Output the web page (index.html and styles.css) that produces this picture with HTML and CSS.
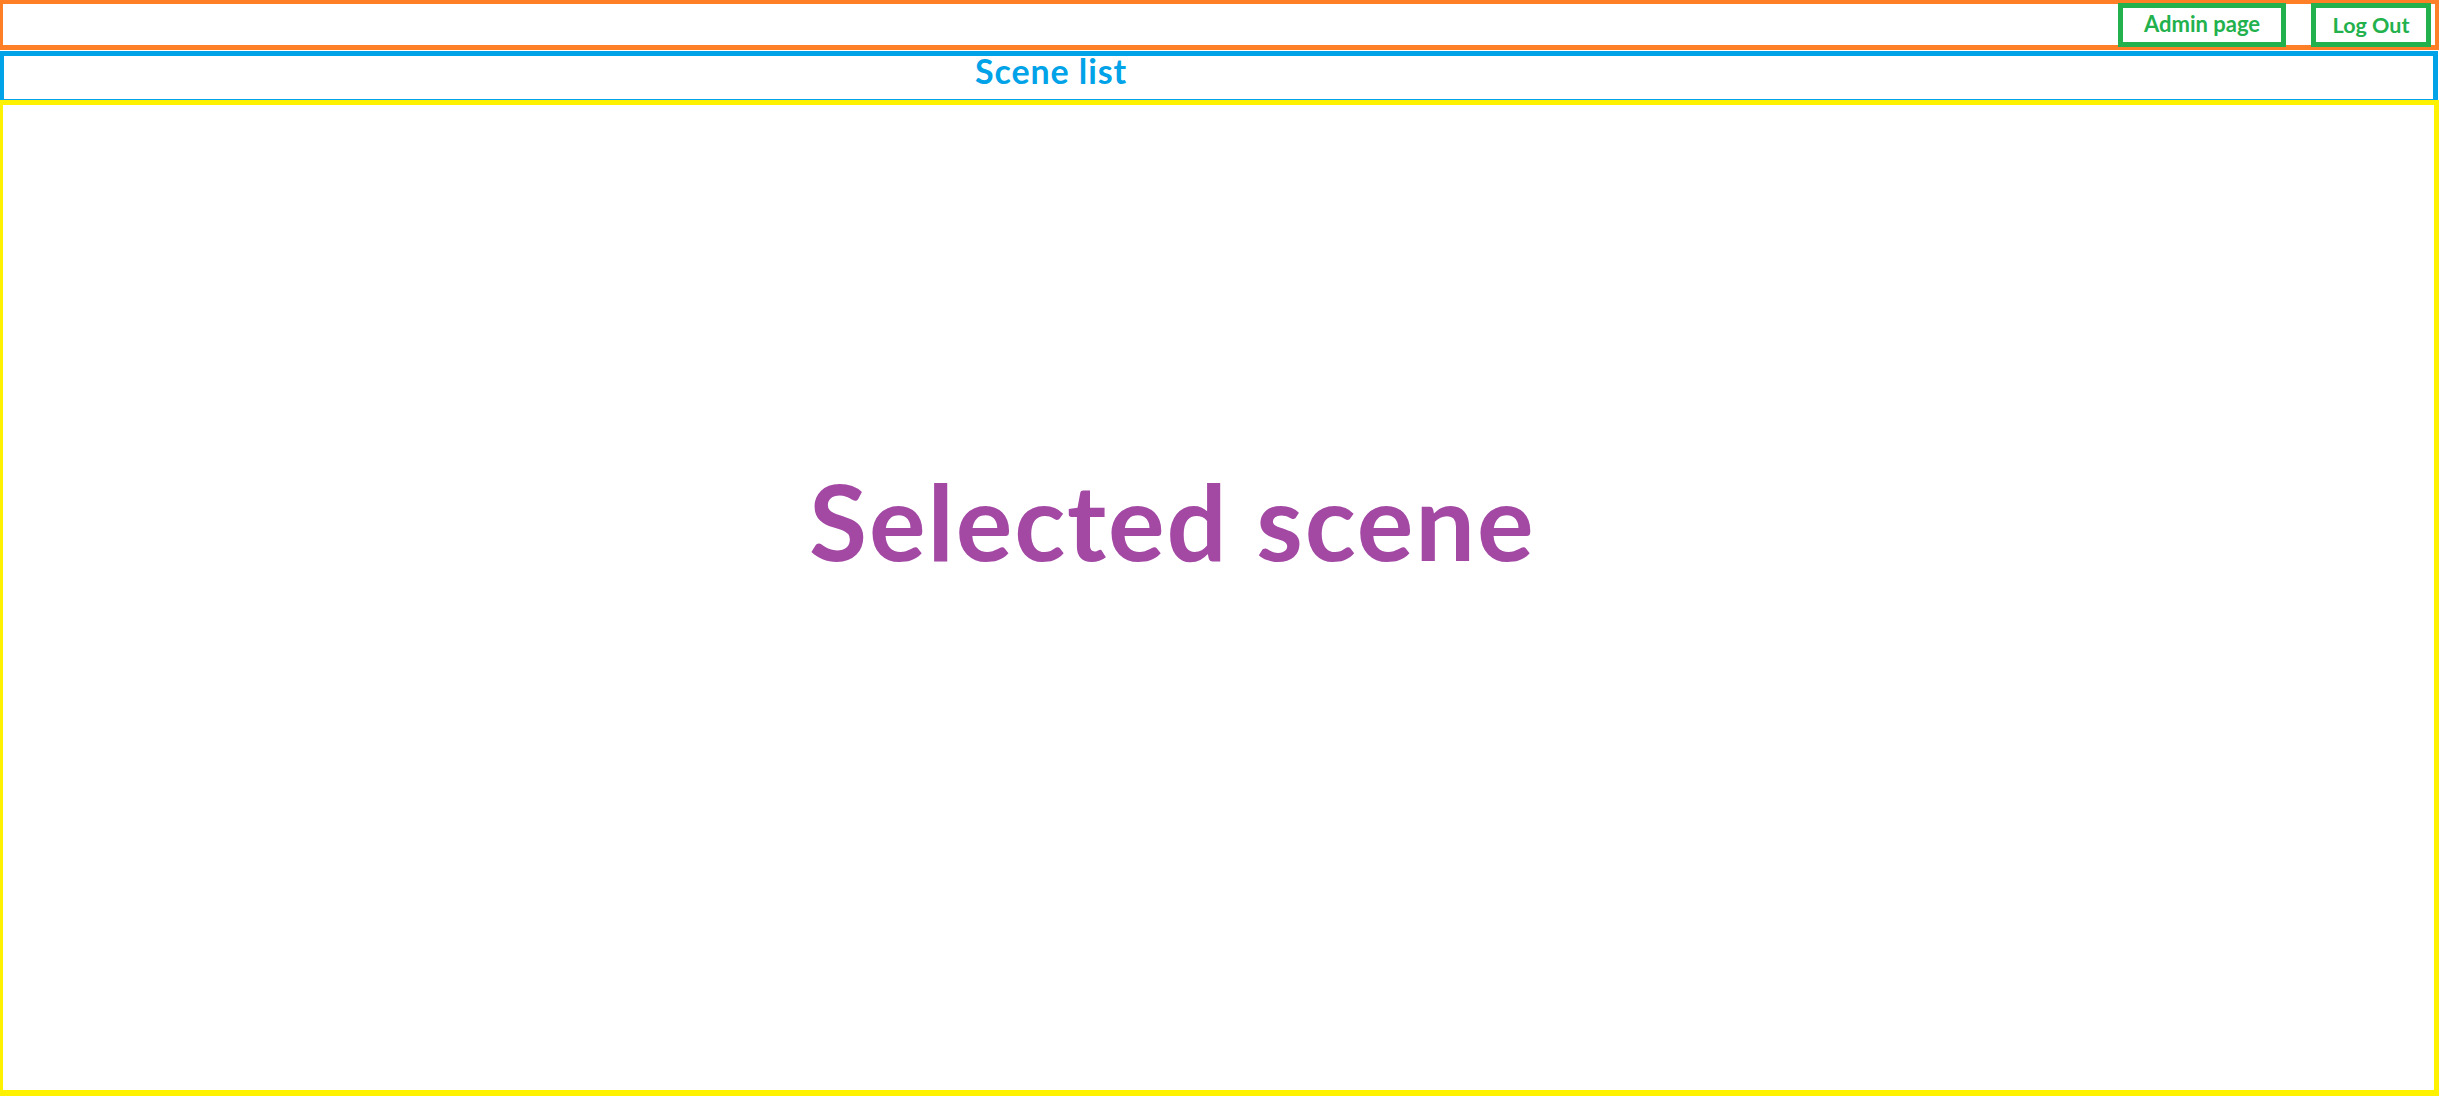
FILE: index.html
```html
<!DOCTYPE html>
<html lang="en">
<head>
<meta charset="utf-8">
<title>Scenes</title>
<link rel="stylesheet" href="styles.css">
</head>
<body>
<header class="topbar">
  <a class="btn btn-admin" href="#">Admin page</a>
  <a class="btn btn-logout" href="#">Log Out</a>
</header>
<nav class="scene-list">
  <span class="scene-list-title">Scene list</span>
</nav>
<main class="scene-view">
  <h1 class="scene-title">Selected scene</h1>
</main>
</body>
</html>
```
FILE: styles.css
```css
* { box-sizing: border-box; }
html, body { margin: 0; padding: 0; background: #ffffff; }
body {
  width: 2439px;
  height: 1096px;
  overflow: hidden;
  font-family: Lato, "Open Sans", sans-serif;
  font-weight: 700;
}
.topbar {
  height: 50px;
  border-style: solid;
  border-color: #ff7f27;
  border-width: 4px 4px 5px 3px;
  display: flex;
  justify-content: flex-end;
  align-items: flex-start;
  gap: 25px;
  padding-right: 4px;
}
.btn {
  display: block;
  height: 44px;
  margin-top: -1px;
  border: 5px solid #22b14c;
  color: #22b14c;
  text-decoration: none;
  text-align: center;
  font-size: 22px;
  position: relative;
}
.btn-admin { width: 168px; line-height: 31px; }
.btn-logout { width: 120px; line-height: 35px; font-size: 21.5px; }
.scene-list {
  height: 49px;
  margin: 1px 1px 0 0;
  border-style: solid;
  border-color: #00a2e8;
  border-width: 5px 5px 1px 4px;
  padding-left: 971px;
}
.scene-list-title {
  display: block;
  color: #00a2e8;
  font-size: 34px;
  line-height: 30px;
  letter-spacing: 0.9px;
}
.scene-view {
  height: 996px;
  border-style: solid;
  border-color: #fff200;
  border-width: 5px 5px 6px 3px;
  padding: 362px 0 0 806px;
}
.scene-title {
  margin: 0;
  color: #a349a4;
  font-size: 106px;
  line-height: 106px;
  font-weight: 700;
  letter-spacing: 1.9px;
}
```
